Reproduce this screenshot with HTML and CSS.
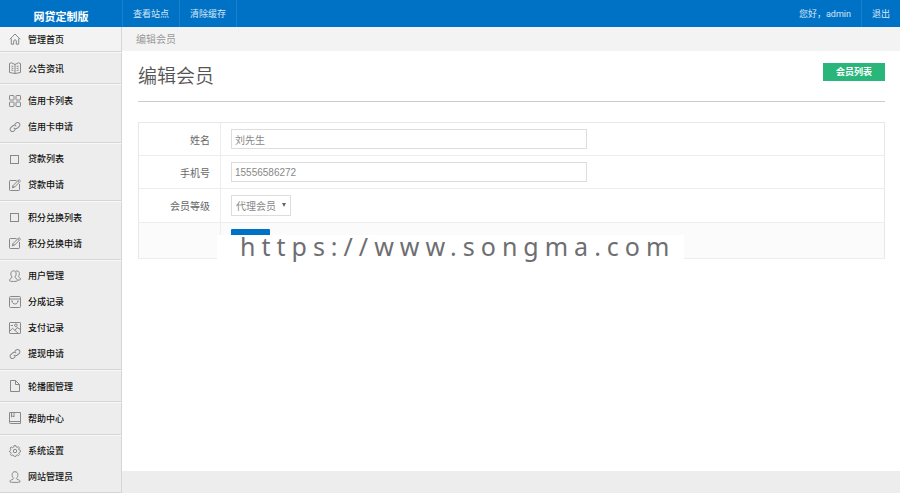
FILE: index.html
```html
<!DOCTYPE html>
<html lang="zh-CN">
<head>
    <meta charset="UTF-8">
    <meta name="viewport" content="width=device-width, initial-scale=1.0">
    <title>编辑会员</title>
    <link rel="stylesheet" href="styles.css">
</head>
<body>
    <!-- icons used in the menu -->
    <svg class="sprite" aria-hidden="true">
        <symbol id="i-home" viewBox="0 0 12 12"><path d="M.8 6.3 6 1l5.2 5.3M2.3 5.5v5.7h2.4V8c0-1.6 2.6-1.6 2.6 0v3.2h2.4V5.5"/></symbol>
        <symbol id="i-book" viewBox="0 0 12 12"><path d="M6 2.5v9M.5 1.5v9L6 11.5l5.5-1v-9L9.500.8 6 2.500 2.500.8zM2.500 4l1.800.5M2.500 6l1.800.5M2.500 8l1.800.5M9.500 4l-1.800.5M9.500 6l-1.800.5M9.500 8l-1.800.5"/></symbol>
        <symbol id="i-grid" viewBox="0 0 12 12"><rect x=".5" y=".5" width="4.5" height="4.5" rx=".6"/><rect x="7" y=".5" width="4.5" height="4.5" rx=".6"/><rect x=".5" y="7" width="4.5" height="4.5" rx=".6"/><rect x="7" y="7" width="4.5" height="4.5" rx=".6"/></symbol>
        <symbol id="i-link" viewBox="0 0 12 12"><g transform="rotate(-45 6 6)"><path d="M4.500 8H2.200a2.300 2.300 0 0 1 0-4.500h3a2.300 2.300 0 0 1 2.200 2.800M7.500 4h2.300a2.300 2.300 0 0 1 0 4.500h-3a2.300 2.300 0 0 1-2.200-2.800"/></g></symbol>
        <symbol id="i-square" viewBox="0 0 12 12"><rect x="1.500" y="2.500" width="8" height="8"/></symbol>
        <symbol id="i-edit" viewBox="0 0 12 12"><path d="M7.500 1.500H1.200C.8 1.500.5 1.800.5 2.200v8.600c0 .4.3.7.7.7h8.600c.4 0 .7-.3.7-.7V5M3.300 8.900 4 6.600 9.600 1c.6-.7 2.200.8 1.500 1.500L5.500 8.100zM8.700 2l1.400 1.400M4 6.600l1.500 1.500"/></symbol>
        <symbol id="i-users" viewBox="0 0 12 12"><path d="M3.100 7C1.200 5 1.400.8 4.500.8S7.800 5 5.900 7c0 1.500 2.600 1 2.600 3.700 0 1-8 1-8 0C.5 8 3.100 8.500 3.100 7M6.700 1.200C10.400-.2 11.300 4 9.400 6.300c0 1.200 2.100.8 2.100 2.900 0 .7-1 .9-2.500.9"/></symbol>
        <symbol id="i-bag" viewBox="0 0 12 12"><rect x=".5" y=".5" width="11" height="11" rx="1"/><path d="M.5 3h11M3 5c.3 4 5.700 4 6 0M2.300 5h1.400M8.300 5h1.400"/></symbol>
        <symbol id="i-image" viewBox="0 0 12 12"><rect x=".5" y=".5" width="11" height="11" rx=".6"/><circle cx="6.900" cy="3.200" r="1.300"/><path d="m1 9 2.500-2.700L6 8.500l2-3 3 1.700M6 8.500l3 2.600M1.700 3.500H4"/></symbol>
        <symbol id="i-page" viewBox="0 0 12 12"><path d="M1.500.5h5l4 4v7h-9zM6.500.5v4h4"/></symbol>
        <symbol id="i-help" viewBox="0 0 12 12"><path d="M.5.5h11v11H1.300c-.5 0-.8-.4-.8-.8zM.5 9.500h11M2.500.5V5l1.300-1L5 5V.5"/></symbol>
        <symbol id="i-gear" viewBox="0 0 12 12"><circle cx="6" cy="6" r="1.700"/><path d="m5 .6-.3 1.500-1.300.6-1.200-.8-1.100 1.200.8 1.200-.5 1.100L.5 6v.8l1.300.6.4 1-.7 1.200 1 1.100 1.300-.7 1.100.5.4 1.100h1.500l.4-1.200 1.100-.5 1.200.7 1-1.100-.7-1.200.5-1 1.300-.5V5.300L10.200 5l-.5-1.100.8-1.200-1.200-1-1.200.7-1-.5L6.800.6z"/></symbol>
        <symbol id="i-user" viewBox="0 0 12 12"><path d="M4.600 7.500C2.500 5.500 2.400.7 6 .7s3.500 4.800 1.400 6.800c0 1.300 3.800.9 3.800 3.300 0 .8-10.400.8-10.400 0 0-2.400 3.800-2 3.800-3.300"/></symbol>
    </svg>

    <header class="topbar">
        <h1 class="logo">网贷定制版</h1>
        <nav class="top-left">
            <a href="#">查看站点</a>
            <a href="#">清除缓存</a>
        </nav>
        <div class="top-right">
            <span>您好，admin</span>
            <a href="#">退出</a>
        </div>
    </header>

    <div class="layout">
        <nav class="sidebar">
            <ul class="menu-home">
                <li><a href="#"><svg><use href="#i-home"/></svg>管理首页</a></li>
            </ul>
            <ul>
                <li><a href="#"><svg><use href="#i-book"/></svg>公告资讯</a></li>
            </ul>
            <ul>
                <li><a href="#"><svg><use href="#i-grid"/></svg>信用卡列表</a></li>
                <li><a href="#"><svg><use href="#i-link"/></svg>信用卡申请</a></li>
            </ul>
            <ul>
                <li><a href="#"><svg><use href="#i-square"/></svg>贷款列表</a></li>
                <li><a href="#"><svg><use href="#i-edit"/></svg>贷款申请</a></li>
            </ul>
            <ul>
                <li><a href="#"><svg><use href="#i-square"/></svg>积分兑换列表</a></li>
                <li><a href="#"><svg><use href="#i-edit"/></svg>积分兑换申请</a></li>
            </ul>
            <ul>
                <li><a href="#"><svg><use href="#i-users"/></svg>用户管理</a></li>
                <li><a href="#"><svg><use href="#i-bag"/></svg>分成记录</a></li>
                <li><a href="#"><svg><use href="#i-image"/></svg>支付记录</a></li>
                <li><a href="#"><svg><use href="#i-link"/></svg>提现申请</a></li>
            </ul>
            <ul>
                <li><a href="#"><svg><use href="#i-page"/></svg>轮播图管理</a></li>
            </ul>
            <ul>
                <li><a href="#"><svg><use href="#i-help"/></svg>帮助中心</a></li>
            </ul>
            <ul>
                <li><a href="#"><svg><use href="#i-gear"/></svg>系统设置</a></li>
                <li><a href="#"><svg><use href="#i-user"/></svg>网站管理员</a></li>
            </ul>
        </nav>

        <main class="main">
            <div class="breadcrumb">编辑会员</div>
            <div class="content">
                <div class="title">
                    <h2>编辑会员</h2>
                    <a class="btn-list" href="#">会员列表</a>
                </div>
                <form class="form-wrap">
                    <table class="form-table">
                        <tbody>
                            <tr>
                                <th><label for="name">姓名</label></th>
                                <td><input type="text" id="name" value="刘先生"></td>
                            </tr>
                            <tr>
                                <th><label for="phone">手机号</label></th>
                                <td><input type="text" id="phone" value="15556586272"></td>
                            </tr>
                            <tr>
                                <th><label for="level">会员等级</label></th>
                                <td>
                                    <span class="select">
                                        <select id="level">
                                            <option>代理会员</option>
                                        </select>
                                    </span>
                                </td>
                            </tr>
                        </tbody>
                        <tfoot>
                            <tr>
                                <th></th>
                                <td><button type="submit" class="btn-submit" aria-label="提交"></button></td>
                            </tr>
                        </tfoot>
                    </table>
                    <div class="watermark">https://www.songma.com</div>
                </form>
            </div>
        </main>
    </div>
</body>
</html>
```
FILE: styles.css
```css
* {
    box-sizing: border-box;
}

body {
    margin: 0;
    min-height: 100vh;
    display: flex;
    flex-direction: column;
    font-family: "Liberation Sans", "Noto Sans CJK SC", sans-serif;
    font-size: 10px;
    color: #666;
    background: #ededed;
}

a {
    color: inherit;
    text-decoration: none;
}

ul {
    margin: 0;
    padding: 0;
    list-style: none;
}

.sprite {
    display: none;
}

/* top bar */
.topbar {
    display: flex;
    height: 27px;
    background: #0072c6;
    color: #d5e6f5;
    font-size: 9px;
    line-height: 28px;
}

.logo {
    width: 122px;
    margin: 0;
    padding-top: 3px;
    font-size: 11px;
    line-height: 28px;
    text-align: center;
    color: #fff;
}

.top-left,
.top-right {
    display: flex;
}

.top-left {
    border-left: 1px solid #1a80cb;
}

.top-left a {
    padding: 0 10px;
    border-right: 1px solid #1a80cb;
}

.top-right {
    margin-left: auto;
}

.top-right span,
.top-right a {
    padding: 0 10px;
}

.top-right span {
    font-family: Roboto, "Noto Sans CJK SC", sans-serif;
}

.top-right a {
    border-left: 1px solid #1a80cb;
}

.layout {
    flex: 1;
    display: flex;
}

/* left menu */
.sidebar {
    width: 122px;
    display: flex;
    flex-direction: column;
    color: #111;
    font-size: 9px;
}

.sidebar ul {
    flex: 1 0 auto;
    display: flex;
    flex-direction: column;
    justify-content: center;
    padding: 2px 0;
    border-top: 1px solid #f8f8f8;
    border-right: 1px solid #d5d5d5;
    border-bottom: 1px solid #d5d5d5;
}

.sidebar .menu-home {
    flex: none;
    height: 25px;
    padding: 0;
    border-top: 0;
    background: #f3f3f3;
}

.sidebar .menu-home a {
    height: 24px;
}

.sidebar a {
    display: flex;
    align-items: center;
    gap: 7px;
    height: 26px;
    padding-left: 9px;
    font-weight: 500;
}

.sidebar svg {
    width: 12px;
    height: 12px;
    fill: none;
    stroke: #888;
    stroke-width: 1;
}

/* page body */
.main {
    flex: 1;
    display: flex;
    flex-direction: column;
    margin-bottom: 22px;
    background: #fff;
}

.breadcrumb {
    height: 24px;
    padding-left: 14px;
    line-height: 25px;
    color: #999;
    background: #f3f3f3;
}

.content {
    padding: 0 15px 0 16px;
}

.title {
    display: flex;
    justify-content: space-between;
    align-items: flex-start;
    height: 51px;
    padding-top: 12px;
    border-bottom: 1px solid #ccc;
}

.title h2 {
    margin: 0;
    font-size: 19px;
    font-weight: 350;
    line-height: 28px;
    color: #555;
}

.btn-list {
    padding: 0 13px;
    background: #2ab67b;
    color: #fff;
    font-size: 9px;
    font-weight: bold;
    line-height: 18px;
}

/* form */
.form-wrap {
    position: relative;
    margin-top: 20px;
}

.form-table {
    width: 100%;
    border-collapse: collapse;
    border: 1px solid #e8e8e8;
}

.form-table tr {
    border-bottom: 1px solid #ededed;
}

.form-table th {
    width: 82px;
    padding: 0 10px;
    border-right: 1px solid #ededed;
    font-weight: normal;
    text-align: right;
}

.form-table td {
    padding: 6px 10px;
}

.form-table tfoot {
    background: #fbfbfb;
    border-top: 1px solid #e0e0e0;
}

.form-table input,
.form-table select {
    display: block;
    height: 20px;
    padding: 0 3px;
    border: 1px solid #ddd;
    border-radius: 0;
    background: #fff;
    color: #888;
    font-family: inherit;
    font-size: 10px;
}

.form-table input {
    width: 100%;
    max-width: 356px;
}

.select {
    position: relative;
    display: inline-block;
    vertical-align: top;
}

.form-table select {
    width: 60px;
    height: 21px;
    padding: 2px 4px 0;
    appearance: none;
}

.select::after {
    content: "";
    position: absolute;
    top: 8px;
    right: 5px;
    border: 2px solid transparent;
    border-top: 4px solid #666;
    border-bottom: 0;
}

.btn-submit {
    display: block;
    width: 39px;
    height: 23px;
    padding: 0;
    border: 0;
    border-radius: 1px;
    background: #0072c6;
}

.watermark {
    position: absolute;
    top: 113px;
    left: 79px;
    height: 25px;
    padding: 0 9px 0 23px;
    background: #fff;
    color: #6e6e72;
    font-family: "Noto Sans", sans-serif;
    font-size: 25px;
    line-height: 22px;
    letter-spacing: 6px;
}
```
